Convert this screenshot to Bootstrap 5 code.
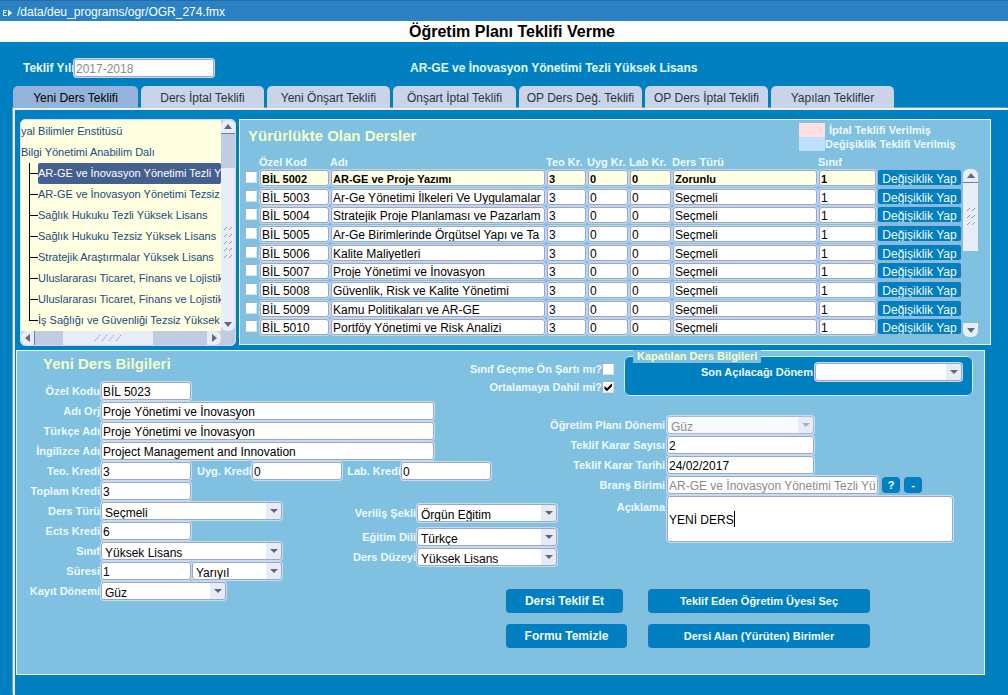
<!DOCTYPE html>
<html lang="tr">
<head>
<meta charset="utf-8">
<meta name="viewport" content="width=device-width, initial-scale=1">
<title>Öğretim Planı Teklifi Verme</title>
<link rel="stylesheet" href="https://cdn.jsdelivr.net/npm/bootstrap@5.3.0/dist/css/bootstrap.min.css">
<style>
:root { --deep:#0080c0; --pale:#80c0e0; --cream:#ffffe1; --edge:#9aa6cc; --track:#c0cce2; --thumb:#e9edf7; }
body { background:var(--deep); font-family:"Liberation Sans",Arial,sans-serif; font-size:12px; line-height:14px; color:#000; min-height:100vh; }
.title-strip { background:#2a82c5; border-top:1px solid #2a6da6; height:21px; color:#fff; padding:2px 3px 0; gap:5px; }
.page-title { background:#fff; font-size:16px; line-height:21px; font-weight:700; padding-left:16px; }
.top-fields { height:44px; padding:7px 0 0 23px; }
.lbl { font-size:11px; font-weight:700; color:#ecfaff; white-space:nowrap; }
.lbl-year { font-size:12px; width:51px; }
.program-name { margin-left:196px; font-size:12px; color:#e2fbff; }
/* text boxes */
.box { appearance:none; border:1px solid var(--edge); box-shadow:0 0 0 1px #c4dcf0; border-radius:3px; background:#fff; height:18px; padding:2px 1px 0; font-size:12px; line-height:14px; color:#000; min-width:0; }
.box:disabled { color:#8c8c8c; opacity:1; }
select.box { padding:3px 18px 0 3px; background:#fff url("data:image/svg+xml,%3Csvg xmlns='http://www.w3.org/2000/svg' width='15' height='18'%3E%3Crect width='15' height='18' fill='%23e6ebf5'/%3E%3Cpath d='M4 7h8l-4 4z' fill='%23606880'/%3E%3C/svg%3E") no-repeat right center; }
select.box:disabled { background-color:#f8fafd; border-color:#b0b8d0; background-image:url("data:image/svg+xml,%3Csvg xmlns='http://www.w3.org/2000/svg' width='15' height='18'%3E%3Crect width='15' height='18' fill='%23e6ebf5'/%3E%3Cpath d='M4 7h8l-4 4z' fill='%23a8aebc'/%3E%3C/svg%3E"); }
.tick { appearance:none; width:12px; height:12px; margin:0; background:#fff; border:1px solid #a8b0c4; border-right-color:#d8e0ea; border-bottom-color:#d8e0ea; flex:none; display:block; }
.tick:checked { background:#fff url("data:image/svg+xml,%3Csvg xmlns='http://www.w3.org/2000/svg' width='10' height='10'%3E%3Cpath d='M1.500 4v3L4 9.200l5-5V1.200l-5 5z' fill='%23000'/%3E%3C/svg%3E") no-repeat center; }
.w-s { width:90px; } .w-m { width:125px; } .w-l { width:181px; } .w-d { width:140px; } .w-p { width:147px; } .w-xl { width:333px; } .w-b { width:211px; }
/* tabs */
.tab-row { padding-left:13px; gap:3px; list-style:none; margin:0; }
.tab-link { display:block; width:123px; height:22px; border:0; border-radius:5px 5px 0 0; background:#c9d3ea; color:#2d3340; padding:2px 0 0; text-align:center; }
.tab-link.active { width:125px; background:#93b3da; color:#000; }
.tab-body { margin-left:13px; border-left:2px solid #e4edf8; border-top:2px solid #eaf0fa; padding:9px 17px 0 1px; min-height:587px; box-shadow:-1px -1px 0 #8296c0; }
/* tree */
.tree-box { width:216px; height:227px; margin-left:4px; border:1px solid #d4def0; border-radius:5px; background:var(--track); display:grid; grid-template-columns:minmax(0,1fr) 14px; grid-template-rows:minmax(0,1fr) 14px; overflow:hidden; }
.tree-view { background:var(--cream); overflow:hidden; font-size:11px; white-space:nowrap; color:#204a7c; padding-top:1px; }
.tree-view ul { list-style:none; margin:0; padding:0; }
.tree-view a { display:block; color:inherit; text-decoration:none; line-height:21px; }
.tree-view .branch { padding-left:8px; }
.branch li { position:relative; padding-left:9px; }
.branch li::before { content:""; position:absolute; left:0; top:0; width:9px; height:11px; border-left:1px solid #000; border-bottom:1px solid #000; }
.branch li:not(:last-child)::after { content:""; position:absolute; left:0; top:0; height:21px; border-left:1px solid #000; }
.branch a.chosen { background:#45608f; color:#fff; border-radius:2px; }
.bar-btn { border:0; padding:0; width:14px; height:14px; background:var(--thumb); flex:none; display:flex; align-items:center; justify-content:center; }
.bar-up { border-radius:6px 6px 0 0; border-bottom:1px solid #7080a0; } .bar-down { border-radius:0 0 6px 6px; }
.bar-left { border-radius:6px 0 0 6px; border-right:1px solid #7080a0; } .bar-right { border-radius:0 6px 6px 0; }
.thumb { background:var(--thumb); display:flex; align-items:center; justify-content:center; }
/* panels */
.pane { background:var(--pale); border:1px solid #e8f6ff; }
.pane-title { font-size:15px; line-height:18px; font-weight:700; color:#f4ffc8; margin:0; }
.course-pane { height:226px; margin-left:3px; padding:0 12px 0 3px; }
.course-head { height:35px; }
.legend-box { width:167px; padding-top:3px; margin-right:12px; }
.swatch { width:26px; height:14px; flex:none; }
.course-table { table-layout:fixed; width:100%; border-collapse:collapse; }
.course-table th { font-size:11px; line-height:14px; height:14px; padding:0; color:#ecfaff; white-space:nowrap; }
.course-table td { padding:1px 1px 0; height:19px; line-height:0; vertical-align:top; }
.course-table tr:nth-child(3n+2) td { height:18px; }
.course-table .box { width:100%; height:16px; box-shadow:0 0 0 1px #c4d4ea; }
.course-table .current .box { background:#ffffe1; font-weight:700; font-size:11px; }
.course-bar { padding:14px 0 0 1px; }
.course-bar > * { width:15px; }
.act { border:0; border-radius:4px; background:var(--deep); color:#f4fbff; font-weight:700; font-size:11px; box-shadow:0 0 0 1px #94b4d2; padding:0; }
.change { width:100%; height:15px; overflow:hidden; font-weight:400; font-size:12px; line-height:18px; white-space:nowrap; border-radius:2px; }
/* form */
.offer-form { display:grid; grid-template-columns:320px 122px 98px minmax(0,1fr); grid-template-rows:152px auto; min-height:325px; margin:4px 6px 0 0; }
.area-left { grid-column:1/4; grid-row:1/3; padding-top:4px; }
.area-right { grid-column:3/5; grid-row:1/3; padding:5px 11px 0 0; }
.area-mid { grid-column:2/4; grid-row:2; }
.line { display:flex; align-items:center; height:20px; }
.line > .lbl:first-child { width:84px; text-align:right; padding-right:1px; flex:none; }
.area-right .line > .lbl:first-child { width:208px; padding-right:2px; }
.area-mid .line > .lbl:first-child { width:80px; }
.closed-set { background:var(--deep); border:1px solid #d0ecfa; border-radius:6px; height:40px; margin-left:10px; position:relative; padding:6px 10px 0 0; }
.closed-set legend { position:absolute; left:8px; top:-7px; width:auto; margin:0; padding:0 4px; background:var(--pale); font-size:11px; line-height:13px; font-weight:700; color:#f4ffc8; float:none; }
.sq { width:18px; height:16px; }
.note { width:286px; height:46px; padding:16px 1px 0; resize:none; overflow:hidden; }
.caret { position:absolute; left:67px; top:15px; width:1px; height:16px; background:#000; }
.h-btn { height:24px; }
.wide { width:222px; }
</style>
</head>
<body>
<header>
  <div class="title-strip d-flex align-items-center">
    <svg width="9" height="10" viewBox="0 0 9 10" aria-hidden="true"><path d="M0 3h4v1H1v1h2v1H1v2h3v1H0z" fill="#d8ecff"/><path d="M5 2.500L9 6L5 9.500z" fill="#fff"/></svg>
    <span>/data/deu_programs/ogr/OGR_274.fmx</span>
  </div>
  <h1 class="page-title text-center m-0">Öğretim Planı Teklifi Verme</h1>
  <div class="top-fields d-flex align-items-center">
    <label class="lbl lbl-year" for="yil">Teklif Yılı</label>
    <input id="yil" class="box w-d" value="2017-2018" disabled>
    <strong class="program-name text-nowrap">AR-GE ve İnovasyon Yönetimi Tezli Yüksek Lisans</strong>
  </div>
</header>
<nav aria-label="Teklif türleri">
  <ul class="tab-row d-flex">
    <li><button class="tab-link active">Yeni Ders Teklifi</button></li>
    <li><button class="tab-link">Ders İptal Teklifi</button></li>
    <li><button class="tab-link">Yeni Önşart Teklifi</button></li>
    <li><button class="tab-link">Önşart İptal Teklifi</button></li>
    <li><button class="tab-link">OP Ders Değ. Teklifi</button></li>
    <li><button class="tab-link">OP Ders İptal Teklifi</button></li>
    <li><button class="tab-link">Yapılan Teklifler</button></li>
  </ul>
</nav>
<main class="tab-body">
  <div class="d-flex align-items-start">
    <div class="tree-box flex-shrink-0">
      <div class="tree-view">
        <ul>
          <li><a href="#">yal Bilimler Enstitüsü</a></li>
          <li><a href="#">Bilgi Yönetimi Anabilim Dalı</a>
            <ul class="branch">
              <li><a href="#" class="chosen">AR-GE ve İnovasyon Yönetimi Tezli Y</a></li>
              <li><a href="#">AR-GE ve İnovasyon Yönetimi Tezsiz</a></li>
              <li><a href="#">Sağlık Hukuku Tezli Yüksek Lisans</a></li>
              <li><a href="#">Sağlık Hukuku Tezsiz Yüksek Lisans</a></li>
              <li><a href="#">Stratejik Araştırmalar Yüksek Lisans</a></li>
              <li><a href="#">Uluslararası Ticaret, Finans ve Lojistik</a></li>
              <li><a href="#">Uluslararası Ticaret, Finans ve Lojistik</a></li>
              <li><a href="#">İş Sağlığı ve Güvenliği Tezsiz Yüksek</a></li>
            </ul>
          </li>
        </ul>
      </div>
      <div class="d-flex flex-column">
        <button class="bar-btn bar-up" aria-label="Yukarı"><svg width="8" height="5"><path d="M0 5h8L4 0z" fill="#606880"/></svg></button>
        <div style="height:34px"></div>
        <div class="thumb flex-fill"><svg width="8" height="36"><path d="M0 5l3-3M5 5l3-3M0 12l3-3M5 12l3-3M0 19l3-3M5 19l3-3M0 26l3-3M5 26l3-3M0 33l3-3M5 33l3-3" stroke="#8e9cba"/></svg></div>
        <button class="bar-btn bar-down" aria-label="Aşağı"><svg width="8" height="5"><path d="M0 0h8L4 5z" fill="#606880"/></svg></button>
      </div>
      <div class="d-flex">
        <button class="bar-btn bar-left" aria-label="Sola"><svg width="5" height="8"><path d="M5 0v8L0 4z" fill="#606880"/></svg></button>
        <div style="width:28px"></div>
        <div class="thumb" style="width:90px"><svg width="28" height="8"><path d="M1 7l5-6M8 7l5-6M15 7l5-6M22 7l5-6" stroke="#8e9cba" stroke-dasharray="2 1"/></svg></div>
        <button class="bar-btn bar-right ms-auto" aria-label="Sağa"><svg width="5" height="8"><path d="M0 0v8l5-4z" fill="#606880"/></svg></button>
      </div>
    </div>
    <section class="pane course-pane flex-fill d-flex flex-column">
      <div class="course-head d-flex justify-content-between">
        <h2 class="pane-title" style="padding:7px 0 0 5px">Yürürlükte Olan Dersler</h2>
        <div class="legend-box">
          <div class="d-flex align-items-center"><span class="swatch" style="background:#ffe0e0"></span><span class="lbl ps-1">İptal Teklifi Verilmiş</span></div>
          <div class="d-flex align-items-center"><span class="swatch" style="background:#c0e0ff"></span><span class="lbl">Değişiklik Teklifi Verilmiş</span></div>
        </div>
      </div>
      <div class="d-flex">
        <table class="course-table">
          <colgroup><col style="width:16px"><col style="width:71px"><col><col style="width:41px"><col style="width:42px"><col style="width:43px"><col style="width:146px"><col style="width:59px"><col style="width:85px"></colgroup>
          <thead><tr><th></th><th>Özel Kod</th><th>Adı</th><th>Teo Kr.</th><th>Uyg Kr.</th><th>Lab Kr.</th><th>Ders Türü</th><th>Sınıf</th><th></th></tr></thead>
          <tbody id="courses"></tbody>
        </table>
        <div class="course-bar d-flex flex-column flex-shrink-0">
          <button class="bar-btn bar-up" aria-label="Yukarı"><svg width="8" height="5"><path d="M0 5h8L4 0z" fill="#606880"/></svg></button>
          <div class="thumb" style="height:68px"><svg width="8" height="22"><path d="M0 5l3-3M5 5l3-3M0 12l3-3M5 12l3-3M0 19l3-3M5 19l3-3" stroke="#8e9cba"/></svg></div>
          <button class="bar-btn bar-down mt-auto" aria-label="Aşağı"><svg width="8" height="5"><path d="M0 0h8L4 5z" fill="#606880"/></svg></button>
        </div>
      </div>
    </section>
  </div>

  <form class="offer-form pane" onsubmit="return false">
    <div class="area-left">
      <h2 class="pane-title" style="padding-left:26px;height:26px">Yeni Ders Bilgileri</h2>
      <div class="line"><label class="lbl" for="f1">Özel Kodu</label><input id="f1" class="box w-s" value="BİL 5023"></div>
      <div class="line"><label class="lbl" for="f2">Adı Orj</label><input id="f2" class="box w-xl" value="Proje Yönetimi ve İnovasyon"></div>
      <div class="line"><label class="lbl" for="f3">Türkçe Adı</label><input id="f3" class="box w-xl" value="Proje Yönetimi ve İnovasyon"></div>
      <div class="line"><label class="lbl" for="f4">İngilizce Adı</label><input id="f4" class="box w-xl" value="Project Management and Innovation"></div>
      <div class="line"><label class="lbl" for="f5">Teo. Kredi</label><input id="f5" class="box w-s" value="3">
        <label class="lbl text-end" style="width:61px" for="f6">Uyg. Kredi</label><input id="f6" class="box w-s" value="0">
        <label class="lbl text-end" style="width:59px" for="f7">Lab. Kredi</label><input id="f7" class="box w-s" value="0"></div>
      <div class="line"><label class="lbl" for="f8">Toplam Kredi</label><input id="f8" class="box w-s" value="3"></div>
      <div class="line"><label class="lbl" for="f9">Ders Türü</label><select id="f9" class="box w-l"><option>Seçmeli</option></select></div>
      <div class="line"><label class="lbl" for="f10">Ects Kredi</label><input id="f10" class="box w-s" value="6"></div>
      <div class="line"><label class="lbl" for="f11">Sınıf</label><select id="f11" class="box w-l"><option>Yüksek Lisans</option></select></div>
      <div class="line"><label class="lbl" for="f12">Süresi</label><input id="f12" class="box w-s" value="1"><select class="box w-s" style="margin-left:1px" aria-label="Süre birimi"><option>Yarıyıl</option></select></div>
      <div class="line"><label class="lbl" for="f13">Kayıt Dönemi</label><select id="f13" class="box w-m"><option>Güz</option></select></div>
    </div>
    <div class="area-right">
      <div class="d-flex" style="height:59px">
        <div style="width:155px;padding-top:4px">
          <div class="d-flex justify-content-end align-items-center" style="height:18px"><label class="lbl" for="c1">Sınıf Geçme Ön Şartı mı?</label><input id="c1" type="checkbox" class="tick"></div>
          <div class="d-flex justify-content-end align-items-center" style="height:18px"><label class="lbl" for="c2">Ortalamaya Dahil mi?</label><input id="c2" type="checkbox" class="tick" checked></div>
        </div>
        <fieldset class="closed-set flex-fill">
          <legend>Kapatılan Ders Bilgileri</legend>
          <div class="d-flex justify-content-end align-items-center"><label class="lbl" style="padding-right:2px" for="r0">Son Açılacağı Dönem</label><select id="r0" class="box w-p"><option></option></select></div>
        </fieldset>
      </div>
      <div class="line"><label class="lbl" for="r1">Öğretim Planı Dönemi</label><select id="r1" class="box w-p" disabled><option>Güz</option></select></div>
      <div class="line"><label class="lbl" for="r2">Teklif Karar Sayısı</label><input id="r2" class="box w-p" value="2"></div>
      <div class="line"><label class="lbl" for="r3">Teklif Karar Tarihi</label><input id="r3" class="box w-p" value="24/02/2017"></div>
      <div class="line"><label class="lbl" for="r4">Branş Birimi</label><input id="r4" class="box w-b" value="AR-GE ve İnovasyon Yönetimi Tezli Yü" disabled>
        <button class="act sq mx-1">?</button><button class="act sq">-</button></div>
      <div class="line" style="height:94px;align-items:flex-start;padding-top:1px"><label class="lbl" for="r5" style="padding-top:4px">Açıklama</label><div class="position-relative"><textarea id="r5" class="box note d-block">YENİ DERS</textarea><span class="caret"></span></div></div>
      <div style="padding-left:47px">
        <div class="d-flex align-items-start" style="gap:25px;height:35px"><button class="act h-btn" style="width:117px;font-size:12px">Dersi Teklif Et</button><button class="act h-btn wide">Teklif Eden Öğretim Üyesi Seç</button></div>
        <div class="d-flex align-items-start" style="gap:21px"><button class="act h-btn" style="width:121px;font-size:12px">Formu Temizle</button><button class="act h-btn wide">Dersi Alan (Yürüten) Birimler</button></div>
      </div>
    </div>
    <div class="area-mid">
      <div class="line mb-1"><label class="lbl" for="m1">Veriliş Şekli</label><select id="m1" class="box w-d"><option>Örgün Eğitim</option></select></div>
      <div class="line"><label class="lbl" for="m2">Eğitim Dili</label><select id="m2" class="box w-d"><option>Türkçe</option></select></div>
      <div class="line"><label class="lbl" for="m3">Ders Düzeyi</label><select id="m3" class="box w-d"><option>Yüksek Lisans</option></select></div>
    </div>
  </form>
</main>
<script src="https://cdn.jsdelivr.net/npm/bootstrap@5.3.0/dist/js/bootstrap.bundle.min.js"></script>
<script>
const courses = [
  ["BİL 5002", "AR-GE ve Proje Yazımı", "Zorunlu"],
  ["BİL 5003", "Ar-Ge Yönetimi İlkeleri Ve Uygulamalar", "Seçmeli"],
  ["BİL 5004", "Stratejik Proje Planlaması ve Pazarlam", "Seçmeli"],
  ["BİL 5005", "Ar-Ge Birimlerinde Örgütsel Yapı ve Ta", "Seçmeli"],
  ["BİL 5006", "Kalite Maliyetleri", "Seçmeli"],
  ["BİL 5007", "Proje Yönetimi ve İnovasyon", "Seçmeli"],
  ["BİL 5008", "Güvenlik, Risk ve Kalite Yönetimi", "Seçmeli"],
  ["BİL 5009", "Kamu Politikaları ve AR-GE", "Seçmeli"],
  ["BİL 5010", "Portföy Yönetimi ve Risk Analizi", "Seçmeli"]
];
const heads = ["Özel Kod", "Adı", "Teo Kr.", "Uyg Kr.", "Lab Kr.", "Ders Türü", "Sınıf"];
document.getElementById("courses").innerHTML = courses.map(([code, name, kind], i) =>
  `<tr${i ? "" : ' class="current"'}><td style="padding:2px"><input type="checkbox" class="tick" aria-label="${code} seç"></td>` +
  [code, name, 3, 0, 0, kind, 1].map((v, k) => `<td><input class="box" aria-label="${heads[k]}" value="${v}"></td>`).join("") +
  `<td><button class="act change">Değişiklik Yap</button></td></tr>`).join("");
</script>
</body>
</html>
